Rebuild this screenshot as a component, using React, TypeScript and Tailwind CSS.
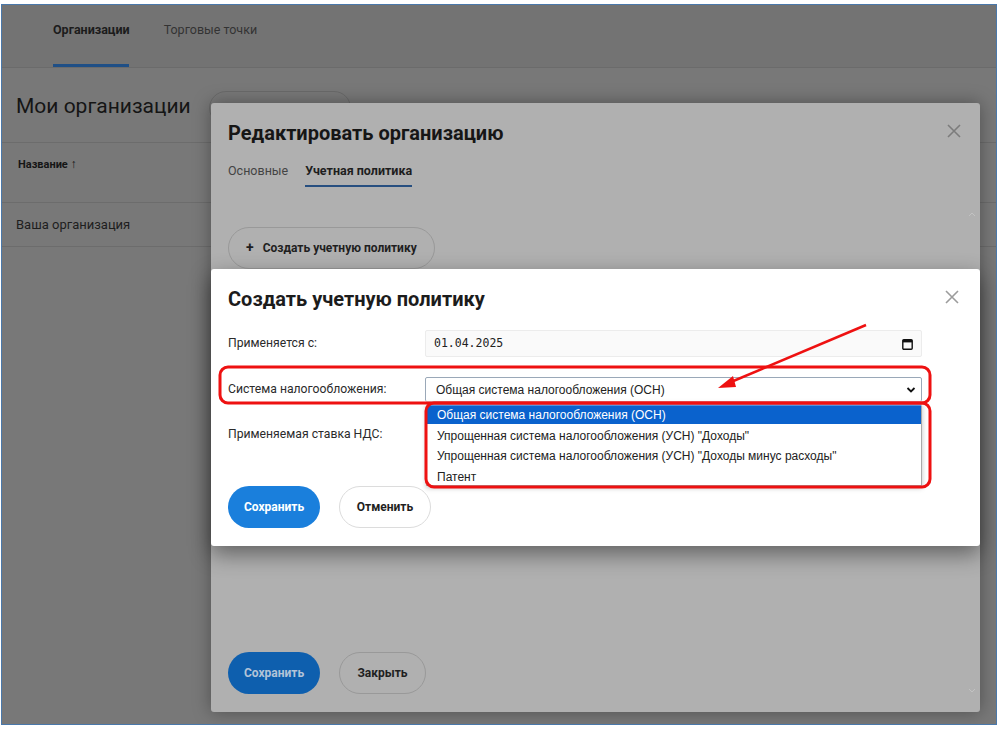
// Screenshot: edit organisation dialog with nested "create accounting policy" dialog

const taxOptions = [
  "Общая система налогообложения (ОСН)",
  "Упрощенная система налогообложения (УСН) \"Доходы\"",
  "Упрощенная система налогообложения (УСН) \"Доходы минус расходы\"",
  "Патент",
];

function CloseIcon({ color }: { color: string }) {
  return (
    <svg width="16" height="16" viewBox="0 0 16 16" fill="none" stroke={color} strokeWidth="1.6">
      <path d="M2 2 L14 14 M14 2 L2 14" />
    </svg>
  );
}

function PageBehind() {
  return (
    <div className="flex flex-col h-full font-['Roboto',sans-serif]">
      <div className="h-[63px] bg-[#737373] flex items-end pl-[51px] gap-[34px] border-b border-[#6b6b6b]">
        <div className="flex flex-col items-center">
          <span className="text-[12.5px] font-bold text-[#1c1c1c] pb-[24px]">Организации</span>
          <div className="h-[3px] w-[76px] bg-[#1f4f86]" />
        </div>
        <span className="text-[12.5px] text-[#333] pb-[27px]">Торговые точки</span>
      </div>
      <div className="flex-1 bg-[#787878] relative">
        <div className="flex items-center h-[74px] pl-[14px] gap-[18px]">
          <span className="text-[21px] text-[#151515] mt-[3px]">Мои организации</span>
          <div className="h-[34px] w-[142px] rounded-full border border-[#6a6a6a] mt-[6px]" />
        </div>
        <div className="border-t border-[#6c6c6c] h-[60px] pl-[16px] pt-[8px]">
          <span className="text-[11px] font-bold text-[#151515]">Название <span className="text-[12px]">↑</span></span>
        </div>
        <div className="border-t border-b border-[#6c6c6c] h-[45px] pl-[14px] flex items-center">
          <span className="text-[13px] text-[#1e1e1e]">Ваша организация</span>
        </div>
      </div>
    </div>
  );
}

function EditOrgModal() {
  return (
    <div className="absolute left-[209px] top-[98px] w-[769px] h-[609px] bg-[#b0b0b0] rounded-[3px] shadow-[0_0_18px_rgba(0,0,0,0.35)] font-['Roboto',sans-serif] flex flex-col pl-[17px] pr-[20px]">
      <div className="flex items-start justify-between pt-[18px]">
        <h2 className="text-[20px] font-bold text-[#161616] leading-[24px]">Редактировать организацию</h2>
        <div className="mt-[2px] mr-[-2px]">
          <CloseIcon color="#7c7c7c" />
        </div>
      </div>
      <div className="flex gap-[17px] mt-[17px]">
        <span className="text-[12.5px] text-[#444]">Основные</span>
        <div className="flex flex-col">
          <span className="text-[12.5px] font-bold text-[#1e1e1e]">Учетная политика</span>
          <div className="h-[2px] bg-[#274f80] mt-[4px]" />
        </div>
      </div>
      <div className="mt-[40px] flex relative">
        <button className="h-[42px] px-[17px] rounded-full border border-[#999] text-[12px] font-bold text-[#1f1f1f] flex items-center gap-[9px]">
          <span className="text-[14px]">+</span>
          Создать учетную политику
        </button>
        <svg className="absolute right-[-16px] top-[-16px]" width="8" height="6" viewBox="0 0 8 6">
          <path d="M1 5 L4 2 L7 5" stroke="#c2c2c2" strokeWidth="1" fill="none" />
        </svg>
      </div>
      <div className="flex-1" />
      <div className="flex gap-[19px] pb-[18px] relative">
        <button className="h-[42px] w-[92px] rounded-full bg-[#0e5fae] text-[12px] font-bold text-[#b3c4d8]">Сохранить</button>
        <button className="h-[42px] w-[87px] rounded-full border border-[#999] text-[12px] font-bold text-[#1f1f1f]">Закрыть</button>
        <svg className="absolute right-[-16px] top-[36px]" width="8" height="6" viewBox="0 0 8 6">
          <path d="M1 1 L4 4 L7 1" stroke="#c2c2c2" strokeWidth="1" fill="none" />
        </svg>
      </div>
    </div>
  );
}

function CreatePolicyModal() {
  return (
    <div className="absolute left-[209px] top-[264px] w-[769px] h-[277px] bg-white rounded-[3px] shadow-[0_8px_22px_rgba(0,0,0,0.45)] font-['Roboto',sans-serif] pl-[17px] pr-[58px] flex flex-col">
      <div className="flex items-start justify-between pt-[18px] mr-[-38px]">
        <h2 className="text-[20px] font-bold text-[#1c1c1c] leading-[24px]">Создать учетную политику</h2>
        <div className="mt-[2px]">
          <CloseIcon color="#9c9c9c" />
        </div>
      </div>
      <div className="flex flex-col gap-[20px] mt-[19px] text-[12.2px] text-[#2b2b2b]">
        <div className="flex items-center h-[27px]">
          <span className="w-[197px]">Применяется с:</span>
          <div className="flex-1 h-[27px] bg-[#fafafa] border border-[#ececec] rounded-[2px] flex items-center justify-between px-[8px]">
            <span className="font-['DejaVu_Sans_Mono',monospace] text-[11.5px] text-[#222]">01.04.2025</span>
            <svg width="11" height="12" viewBox="0 0 11 12">
              <rect x="0.8" y="1.8" width="9.4" height="9.4" rx="1" fill="none" stroke="#111" strokeWidth="1.4" />
              <rect x="0.8" y="1.8" width="9.4" height="2.6" fill="#111" />
            </svg>
          </div>
        </div>
        <div className="flex items-center h-[25px]">
          <span className="w-[197px]">Система налогообложения:</span>
          <div className="flex-1 h-[25px] bg-white border border-[#9aa8b8] rounded-[2px] flex items-center justify-between pl-[10px] pr-[5px]">
            <span className="font-['Liberation_Sans',Arial,sans-serif] text-[12px] text-[#222]">{taxOptions[0]}</span>
            <svg width="10" height="8" viewBox="0 0 10 8">
              <path d="M1.5 2 L5 5.5 L8.5 2" stroke="#111" strokeWidth="1.8" fill="none" />
            </svg>
          </div>
        </div>
        <div className="flex items-center h-[25px] relative">
          <span className="w-[197px]">Применяемая ставка НДС:</span>
          <div className="flex-1 h-[25px] bg-white border border-[#c8c8c8] rounded-[2px]" />
          <div className="absolute left-[198px] right-0 top-[-20px] h-[84px] bg-white border border-[#a9a9a9] shadow-[0_2px_5px_rgba(0,0,0,0.25)] flex flex-col font-['Liberation_Sans',Arial,sans-serif] text-[12px]">
            {taxOptions.map((o, i) => (
              <div
                key={i}
                className={
                  i === 0
                    ? "h-[20.5px] pl-[10px] pt-[4px] flex items-center bg-[#0a62cd] text-white"
                    : "h-[20.5px] pl-[10px] pt-[4px] flex items-center text-[#222]"
                }
              >
                {o}
              </div>
            ))}
          </div>
        </div>
      </div>
      <div className="flex gap-[19px] mt-[39px]">
        <button className="h-[42px] w-[92px] rounded-full bg-[#1a7fdc] text-[12px] font-bold text-white">Сохранить</button>
        <button className="h-[42px] w-[92px] rounded-full border border-[#dcdcdc] bg-white text-[12px] font-bold text-[#1f1f1f]">Отменить</button>
      </div>
    </div>
  );
}

function Annotations() {
  return (
    <svg className="absolute inset-0 pointer-events-none" width="1000" height="730" viewBox="0 0 1000 730">
      <rect x="220" y="367" width="710" height="36" rx="8" fill="none" stroke="#ffffff" strokeWidth="5" opacity="0.6" />
      <rect x="220" y="367" width="710" height="36" rx="8" fill="none" stroke="#ee1111" strokeWidth="3" />
      <rect x="426" y="403" width="504" height="84" rx="8" fill="none" stroke="#ee1111" strokeWidth="3" />
      <path d="M866 325 L731 382" stroke="#ee1111" strokeWidth="2.5" fill="none" />
      <path d="M718 388 L733 376 L736 387 Z" fill="#ee1111" />
    </svg>
  );
}

export default function App() {
  return (
    <div className="w-[1000px] h-[730px] bg-white relative pt-[4px] pl-[1px]">
      <div className="w-[996px] h-[721px] border border-[#4a78aa] relative overflow-hidden bg-[#787878]">
        <PageBehind />
        <EditOrgModal />
        <CreatePolicyModal />
      </div>
      <Annotations />
    </div>
  );
}
